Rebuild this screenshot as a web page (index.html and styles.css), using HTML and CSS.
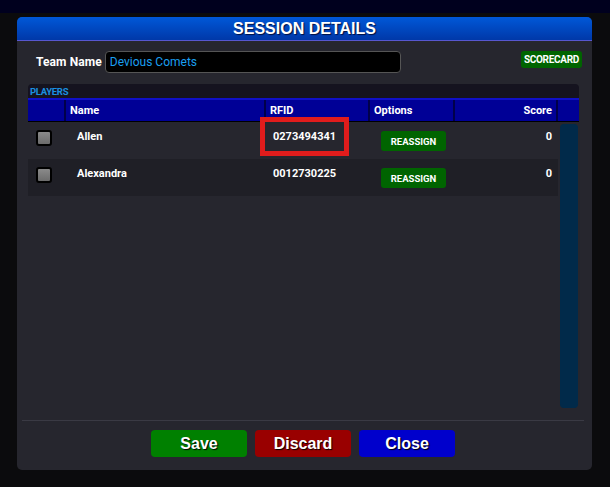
FILE: index.html
```html
<!DOCTYPE html>
<html lang="en">
<head>
    <meta charset="UTF-8">
    <title>Session Details</title>
    <link rel="stylesheet" href="styles.css">
</head>
<body>
<div class="topbar"></div>
<div class="modal">
    <div class="modal-header">SESSION DETAILS</div>
    <div class="modal-content">
        <div class="team-row">
            <label class="team-label">Team Name</label>
            <div class="team-input">Devious Comets</div>
            <div class="scorecard-btn">SCORECARD</div>
        </div>
        <div class="players">
            <div class="players-title">PLAYERS</div>
            <div class="grid head">
                <div class="cell"></div>
                <div class="cell">Name</div>
                <div class="cell">RFID</div>
                <div class="cell">Options</div>
                <div class="cell right">Score</div>
                <div class="cell"></div>
            </div>
            <div class="players-body">
                <div class="rows">
                    <div class="grid row">
                        <div class="cell"><span class="check"></span></div>
                        <div class="cell name">Allen</div>
                        <div class="cell rfid">0273494341<span class="highlight"></span></div>
                        <div class="cell"><span class="reassign">REASSIGN</span></div>
                        <div class="cell right score">0</div>
                    </div>
                    <div class="grid row alt">
                        <div class="cell"><span class="check"></span></div>
                        <div class="cell name">Alexandra</div>
                        <div class="cell rfid">0012730225</div>
                        <div class="cell"><span class="reassign">REASSIGN</span></div>
                        <div class="cell right score">0</div>
                    </div>
                </div>
                <div class="scroll"><div class="scroll-track"></div></div>
            </div>
        </div>
    </div>
    <div class="modal-footer">
        <div class="btn save">Save</div>
        <div class="btn discard">Discard</div>
        <div class="btn close">Close</div>
    </div>
</div>
</body>
</html>
```

FILE: styles.css
```css
body {
    margin: 0;
    background: #0b0b0d;
    font-family: Roboto, "Noto Sans", sans-serif;
    color: #fff;
}

.topbar {
    height: 13px;
    background: #00001e;
}

.modal {
    margin: 4px 0 0 17px;
    width: 575px;
    height: 453px;
    background: #26262e;
    border-radius: 5px;
    display: flex;
    flex-direction: column;
}

.modal-header {
    height: 23px;
    line-height: 24px;
    border-bottom: 1px solid #5757cf;
    border-radius: 5px 5px 0 0;
    background: linear-gradient(#0058d8, #0038a8);
    text-align: center;
    font-family: "Liberation Sans", Arial, sans-serif;
    font-weight: bold;
    font-size: 16px;
    text-shadow: 1px 1px 1px #001040;
}

.modal-content {
    flex: 1;
    padding: 10px 10px 0 11px;
}

.team-row {
    display: flex;
    align-items: flex-start;
}

.team-label {
    margin: 4px 3px 0 8px;
    font-size: 12px;
    font-weight: bold;
    letter-spacing: 0.1px;
    line-height: 14px;
}

.team-input {
    width: 290px;
    height: 20px;
    padding-left: 4px;
    background: #000;
    border: 1px solid #555;
    border-radius: 4px;
    color: #1a9ff0;
    font-size: 12px;
    line-height: 21px;
}

.scorecard-btn {
    margin-left: auto;
    height: 17px;
    padding: 0 3px;
    background: #006400;
    border-radius: 3px;
    font-size: 10px;
    font-weight: bold;
    line-height: 18px;
    letter-spacing: -0.3px;
}

.players {
    margin: 11px 3px 0 0;
}

.players-title {
    height: 14px;
    background: #15131f;
    border-radius: 4px 4px 0 0;
    color: #1a8fe0;
    font-size: 9.5px;
    font-weight: bold;
    line-height: 15px;
    letter-spacing: -0.3px;
    padding-left: 2px;
}

.grid {
    display: grid;
    grid-template-columns: 38px 200px 104px 85px 103px;
}

.grid.head {
    grid-template-columns: 38px 200px 104px 85px 103px 20px;
    background: #000096;
    border-top: 2px solid #1010c8;
    border-bottom: 1px solid #000;
    height: 21px;
}

.head .cell {
    border-right: 2px solid #00004a;
    padding: 0 4px;
    font-size: 11px;
    font-weight: bold;
    line-height: 21px;
}

.head .cell:last-child {
    border-right: none;
}

.right {
    text-align: right;
}

.players-body {
    display: flex;
    height: 288px;
}

.rows {
    width: 530px;
}

.row {
    height: 37px;
    background: #26262e;
}

.row.alt {
    background: #1f1f26;
}

.row .cell {
    font-size: 11px;
    font-weight: bold;
    line-height: 14px;
    padding-top: 8px;
}

.check {
    display: block;
    margin: 0 0 0 8px;
    width: 12px;
    height: 12px;
    border: 2px solid #000;
    border-radius: 3px;
    background: linear-gradient(#8a8a8a, #6c6c6c);
}

.name {
    padding-left: 11px;
}

.rfid {
    position: relative;
    padding-left: 7px;
}

.highlight {
    position: absolute;
    left: -6px;
    top: -5px;
    width: 89px;
    height: 39px;
    box-sizing: border-box;
    border: 5px solid #e01c1c;
}

.reassign {
    display: block;
    margin: 1px 0 0 11px;
    width: 65px;
    height: 20px;
    background: #006400;
    border-radius: 3px;
    text-align: center;
    font-size: 9.5px;
    line-height: 21px;
}

.score {
    padding-right: 6px;
}

.scroll {
    width: 20px;
    padding: 2px 0 2px 2px;
    box-sizing: border-box;
}

.scroll-track {
    height: 100%;
    background: #012a4a;
    border-radius: 4px;
}

.modal-footer {
    margin: 0 8px 0 5px;
    border-top: 1px solid #3a3a44;
    padding: 9px 0 13px;
    display: flex;
    justify-content: center;
    gap: 8px;
}

.btn {
    width: 96px;
    height: 27px;
    border-radius: 4px;
    text-align: center;
    font-family: "Liberation Sans", Arial, sans-serif;
    font-weight: bold;
    font-size: 16px;
    line-height: 28px;
    text-shadow: 1px 1px 1px #000;
}

.save {
    background: #008000;
}

.discard {
    background: #990000;
}

.close {
    background: #0000cc;
}
```
